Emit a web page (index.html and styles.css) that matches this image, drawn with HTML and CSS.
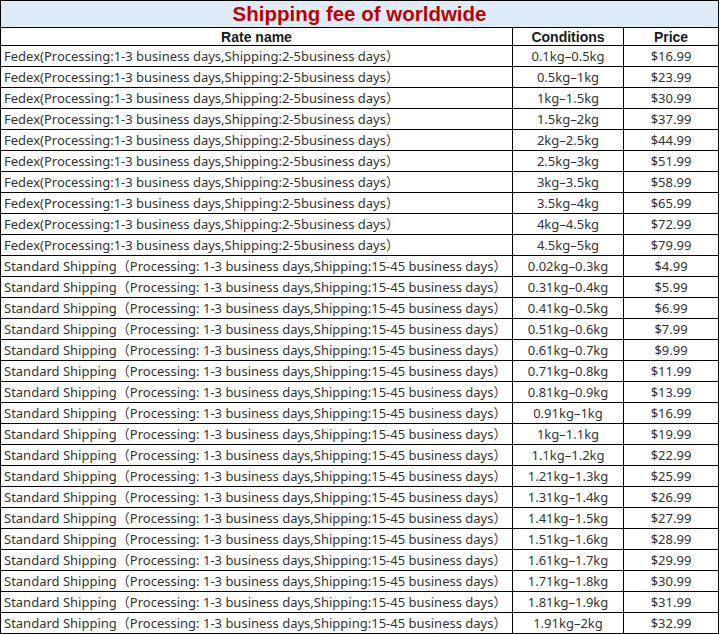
FILE: index.html
```html
<!DOCTYPE html>
<html lang="en">
<head>
    <meta charset="UTF-8">
    <title>Shipping fee of worldwide</title>
    <link rel="stylesheet" href="styles.css">
</head>
<body>
    <table class="rates">
        <colgroup>
            <col class="col-name">
            <col class="col-cond">
            <col class="col-price">
        </colgroup>
        <thead>
            <tr class="title-row">
                <th colspan="3">Shipping fee of worldwide</th>
            </tr>
            <tr class="head-row">
                <th>Rate name</th>
                <th>Conditions</th>
                <th>Price</th>
            </tr>
        </thead>
        <tbody>
            <tr><td>Fedex(Processing:1-3 business days,Shipping:2-5business days）</td><td class="c">0.1kg–0.5kg</td><td class="c">$16.99</td></tr>
            <tr><td>Fedex(Processing:1-3 business days,Shipping:2-5business days）</td><td class="c">0.5kg–1kg</td><td class="c">$23.99</td></tr>
            <tr><td>Fedex(Processing:1-3 business days,Shipping:2-5business days）</td><td class="c">1kg–1.5kg</td><td class="c">$30.99</td></tr>
            <tr><td>Fedex(Processing:1-3 business days,Shipping:2-5business days）</td><td class="c">1.5kg–2kg</td><td class="c">$37.99</td></tr>
            <tr><td>Fedex(Processing:1-3 business days,Shipping:2-5business days）</td><td class="c">2kg–2.5kg</td><td class="c">$44.99</td></tr>
            <tr><td>Fedex(Processing:1-3 business days,Shipping:2-5business days）</td><td class="c">2.5kg–3kg</td><td class="c">$51.99</td></tr>
            <tr><td>Fedex(Processing:1-3 business days,Shipping:2-5business days）</td><td class="c">3kg–3.5kg</td><td class="c">$58.99</td></tr>
            <tr><td>Fedex(Processing:1-3 business days,Shipping:2-5business days）</td><td class="c">3.5kg–4kg</td><td class="c">$65.99</td></tr>
            <tr><td>Fedex(Processing:1-3 business days,Shipping:2-5business days）</td><td class="c">4kg–4.5kg</td><td class="c">$72.99</td></tr>
            <tr><td>Fedex(Processing:1-3 business days,Shipping:2-5business days）</td><td class="c">4.5kg–5kg</td><td class="c">$79.99</td></tr>
            <tr><td>Standard Shipping（Processing: 1-3 business days,Shipping:15-45 business days）</td><td class="c">0.02kg–0.3kg</td><td class="c">$4.99</td></tr>
            <tr><td>Standard Shipping（Processing: 1-3 business days,Shipping:15-45 business days）</td><td class="c">0.31kg–0.4kg</td><td class="c">$5.99</td></tr>
            <tr><td>Standard Shipping（Processing: 1-3 business days,Shipping:15-45 business days）</td><td class="c">0.41kg–0.5kg</td><td class="c">$6.99</td></tr>
            <tr><td>Standard Shipping（Processing: 1-3 business days,Shipping:15-45 business days）</td><td class="c">0.51kg–0.6kg</td><td class="c">$7.99</td></tr>
            <tr><td>Standard Shipping（Processing: 1-3 business days,Shipping:15-45 business days）</td><td class="c">0.61kg–0.7kg</td><td class="c">$9.99</td></tr>
            <tr><td>Standard Shipping（Processing: 1-3 business days,Shipping:15-45 business days）</td><td class="c">0.71kg–0.8kg</td><td class="c">$11.99</td></tr>
            <tr><td>Standard Shipping（Processing: 1-3 business days,Shipping:15-45 business days）</td><td class="c">0.81kg–0.9kg</td><td class="c">$13.99</td></tr>
            <tr><td>Standard Shipping（Processing: 1-3 business days,Shipping:15-45 business days）</td><td class="c">0.91kg–1kg</td><td class="c">$16.99</td></tr>
            <tr><td>Standard Shipping（Processing: 1-3 business days,Shipping:15-45 business days）</td><td class="c">1kg–1.1kg</td><td class="c">$19.99</td></tr>
            <tr><td>Standard Shipping（Processing: 1-3 business days,Shipping:15-45 business days）</td><td class="c">1.1kg–1.2kg</td><td class="c">$22.99</td></tr>
            <tr><td>Standard Shipping（Processing: 1-3 business days,Shipping:15-45 business days）</td><td class="c">1.21kg–1.3kg</td><td class="c">$25.99</td></tr>
            <tr><td>Standard Shipping（Processing: 1-3 business days,Shipping:15-45 business days）</td><td class="c">1.31kg–1.4kg</td><td class="c">$26.99</td></tr>
            <tr><td>Standard Shipping（Processing: 1-3 business days,Shipping:15-45 business days）</td><td class="c">1.41kg–1.5kg</td><td class="c">$27.99</td></tr>
            <tr><td>Standard Shipping（Processing: 1-3 business days,Shipping:15-45 business days）</td><td class="c">1.51kg–1.6kg</td><td class="c">$28.99</td></tr>
            <tr><td>Standard Shipping（Processing: 1-3 business days,Shipping:15-45 business days）</td><td class="c">1.61kg–1.7kg</td><td class="c">$29.99</td></tr>
            <tr><td>Standard Shipping（Processing: 1-3 business days,Shipping:15-45 business days）</td><td class="c">1.71kg–1.8kg</td><td class="c">$30.99</td></tr>
            <tr><td>Standard Shipping（Processing: 1-3 business days,Shipping:15-45 business days）</td><td class="c">1.81kg–1.9kg</td><td class="c">$31.99</td></tr>
            <tr><td>Standard Shipping（Processing: 1-3 business days,Shipping:15-45 business days）</td><td class="c">1.91kg–2kg</td><td class="c">$32.99</td></tr>
        </tbody>
    </table>
</body>
</html>
```

FILE: styles.css
```css
:root {
    --title-red: #c00000;
    --title-bg: #ddebf7;
    --text: #333333;
    --line: #000000;
}

* {
    margin: 0;
    padding: 0;
    box-sizing: border-box;
}

body {
    background-color: #ffffff;
    color: var(--text);
}

.rates {
    width: 718px;
    table-layout: fixed;
    border-collapse: collapse;
    border: 1px solid var(--line);
    font-family: "Noto Sans", "Noto Sans CJK SC", sans-serif;
    font-size: 13px;
}

.col-name {
    width: 512px;
}

.col-cond {
    width: 111px;
}

.col-price {
    width: 95px;
}

th, td {
    border: 1px solid var(--line);
    white-space: nowrap;
    overflow: hidden;
    line-height: 1;
}

td {
    height: 21px;
    padding: 0 0 0 3px;
    text-align: left;
}

td.c {
    padding: 0;
    text-align: center;
}

.title-row th {
    height: 27px;
    background-color: var(--title-bg);
    color: var(--title-red);
    font-family: "Liberation Sans", Arial, sans-serif;
    font-size: 20.5px;
    font-weight: 700;
    text-align: center;
}

.head-row th {
    height: 18px;
    color: #1a1a1a;
    font-family: "Liberation Sans", Arial, sans-serif;
    font-size: 14px;
    font-weight: 700;
    text-align: center;
}
```
